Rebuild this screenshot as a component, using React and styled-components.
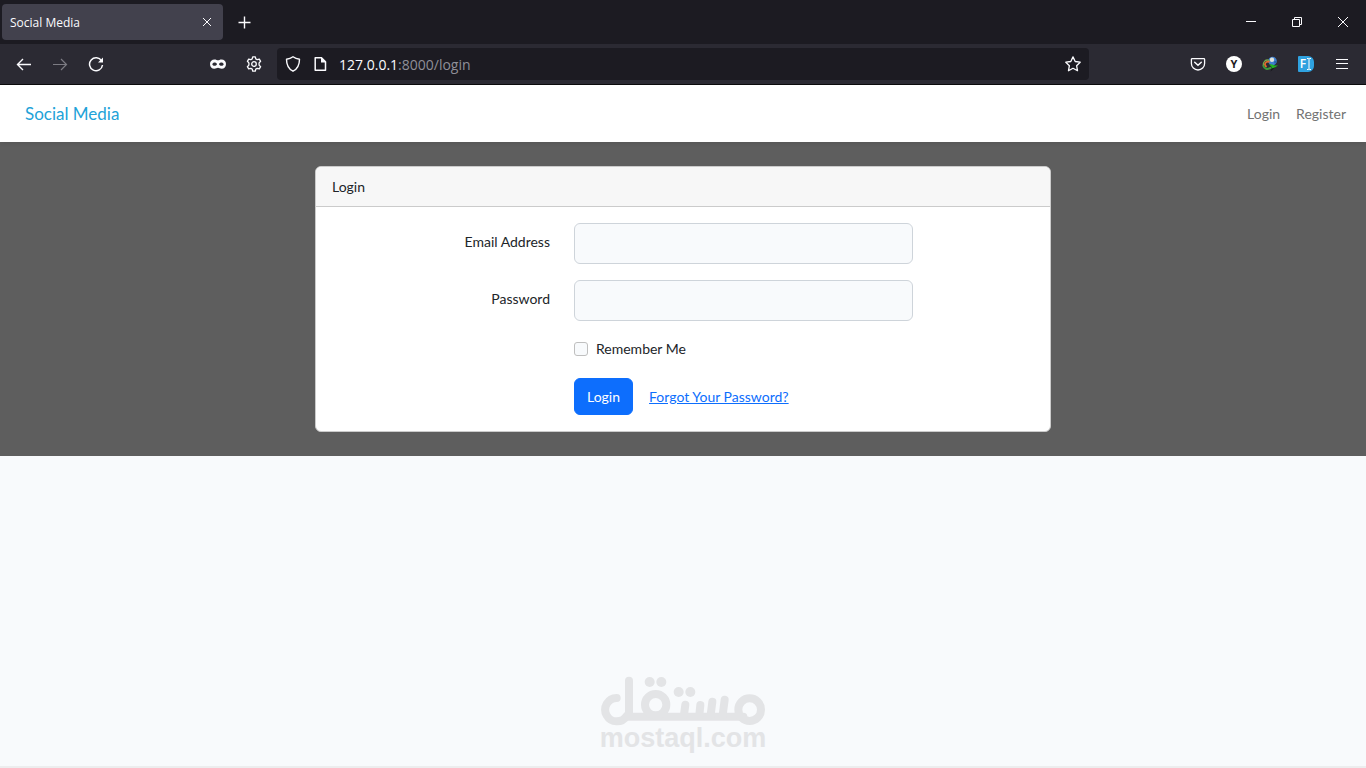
import React, { useState } from "react";
import styled, { createGlobalStyle } from "styled-components";

function App() {
  return (
    <Screen>
      <GlobalStyle />
      <BrowserTabs />
      <BrowserToolbar />
      <Page>
        <NavBar />
        <LoginForm />
        <Watermark />
      </Page>
    </Screen>
  );
}

export default App;

function Icon({ size = 16, children }) {
  return (
    <svg width={size} height={size} viewBox="0 0 16 16" fill="none" stroke="currentColor" aria-hidden="true">
      {children}
    </svg>
  );
}

function BrowserTabs() {
  return (
    <TabBar>
      <Tab>
        <TabTitle>Social Media</TabTitle>
        <CloseTab type="button" aria-label="Close tab">
          <Icon>
            <path d="M4 4l8 8M12 4l-8 8" />
          </Icon>
        </CloseTab>
      </Tab>
      <NewTab type="button" aria-label="New tab">
        <Icon>
          <path d="M8.5 2.5v12M2.5 8.5h12" strokeWidth="1.4" />
        </Icon>
      </NewTab>
      <WindowButtons>
        <WindowButton type="button" aria-label="Minimize">
          <Icon>
            <path d="M3 7.5h10" />
          </Icon>
        </WindowButton>
        <WindowButton type="button" aria-label="Restore">
          <Icon>
            <path d="M3.5 5.5h7v7h-7zM5.5 5.5v-2h7v7h-2" />
          </Icon>
        </WindowButton>
        <WindowButton type="button" aria-label="Close">
          <Icon>
            <path d="M3 3l10 10M13 3L3 13" />
          </Icon>
        </WindowButton>
      </WindowButtons>
    </TabBar>
  );
}

function BrowserToolbar() {
  const [url, setUrl] = useState("/login");
  return (
    <Toolbar>
      <ToolButton type="button" aria-label="Back">
        <Icon>
          <path d="M15 8.500H1.500M7 3L1.500 8.500 7 14" strokeWidth="1.400" />
        </Icon>
      </ToolButton>
      <ToolButton type="button" aria-label="Forward" disabled>
        <Icon>
          <path d="M1 8.500h13.500M9 3l5.500 5.500L9 14" strokeWidth="1.200" />
        </Icon>
      </ToolButton>
      <ToolButton type="button" aria-label="Reload" onClick={() => setUrl("/login")}>
        <Icon>
          <path d="M13.6 4.800A6.500 6.500 0 1 0 14.500 9" strokeWidth="1.500" />
          <path d="M15 1.500v5h-5z" fill="currentColor" stroke="none" />
        </Icon>
      </ToolButton>
      <Spacer />
      <ToolButton type="button" aria-label="Private browsing">
        <Icon>
          <path
            d="M4.500 3.500C2 3.500 0 5 0 8s1.800 4.800 4.300 4.800c1.700 0 2.500-1 3.700-1s2 1 3.700 1C14.200 12.800 16 11 16 8s-2-4.500-4.500-4.500C9.800 3.500 9 4.300 8 4.300s-1.800-.8-3.500-.8zM2.300 8.200c.6-1.900 3.700-2.300 4.700 0-1 2-4 2-4.700 0zm11.400 0c-.7 2-3.700 2-4.700 0 1-2.300 4.100-1.900 4.700 0z"
            fill="currentColor"
            fillRule="evenodd"
            stroke="none"
          />
        </Icon>
      </ToolButton>
      <ToolButton type="button" aria-label="Settings">
        <Icon>
          <path
            d="M6.700.8h2.600l.5 2.100 1.400.8 2.100-.6 1.300 2.200L13.100 6.900v2.200l1.500 1.600-1.300 2.200-2.100-.6-1.400.8-.5 2.100H6.700l-.5-2.100-1.400-.8-2.100.6-1.300-2.200L2.900 9.100V6.900L1.400 5.300l1.300-2.200 2.100.6 1.400-.8z"
            strokeWidth="1.300"
            strokeLinejoin="round"
          />
          <circle cx="8" cy="8" r="2.300" strokeWidth="1.300" />
        </Icon>
      </ToolButton>
      <AddressBar>
        <Icon>
          <path
            d="M8 .8c2 1.500 4.200 2.200 6.500 2.400 0 5.500-1.500 9.500-6.500 12C3 12.700 1.500 8.700 1.500 3.200 3.800 3 6 2.300 8 .8z"
            strokeWidth="1.400"
            strokeLinejoin="round"
          />
        </Icon>
        <Icon>
          <path d="M3.200 1.700h6.300l4 4v8.600H3.200z" strokeWidth="1.500" strokeLinejoin="round" />
          <path d="M9 1v5.500h5.200z" fill="currentColor" stroke="none" />
        </Icon>
        <Address>
          <b>127.0.0.1</b>:8000{url}
        </Address>
        <Star type="button" aria-label="Bookmark this page">
          <Icon>
            <path
              d="M8 .9l2.200 4.600 5 .7-3.600 3.500.9 5L8 12.300l-4.500 2.400.9-5L.8 6.200l5-.7z"
              strokeWidth="1.300"
              strokeLinejoin="round"
            />
          </Icon>
        </Star>
      </AddressBar>
      <Spacer />
      <ToolButton type="button" aria-label="Pocket">
        <Icon>
          <path d="M2.200 2.600h11.600c.5 0 .8.300.8.800v4a6.600 6.600 0 0 1-13.200 0v-4c0-.5.300-.8.800-.8z" strokeWidth="1.300" />
          <path d="M4.700 6.300L8 9.300l3.300-3" strokeWidth="1.500" strokeLinecap="round" />
        </Icon>
      </ToolButton>
      <ToolButton type="button" aria-label="Account">
        <Avatar>Y</Avatar>
      </ToolButton>
      <ToolButton type="button" aria-label="Download manager">
        <Icon>
          <circle cx="10.500" cy="5" r="4.300" fill="#3f7fcf" stroke="none" />
          <circle cx="10" cy="3.800" r="2.200" fill="#dfe3da" stroke="none" />
          <path d="M12 5.500l2.500-.5-1.500 3z" fill="#235ba0" stroke="none" />
          <path d="M7.500 4.500C3.500 2.800.8 6 1.200 10" stroke="#76a94e" strokeWidth="1.300" />
          <path d="M7.500 5.800C3.500 5 1.300 8.500 4.500 11" stroke="#e36c2c" strokeWidth="1.700" />
          <path d="M1.200 9.500c1 3.500 4 4.500 8 2.200" stroke="#3c9a3c" strokeWidth="2" />
          <path d="M7 8.200l3.500.3 2 1H16l-6.500 4 .2-2.500z" fill="#22b422" stroke="none" />
          <path d="M8.500 15.500l1-3 3.500-1z" fill="#15151b" stroke="none" />
        </Icon>
      </ToolButton>
      <ToolButton type="button" aria-label="Form filler">
        <FillBadge>
          F
          <svg width="6" height="12" viewBox="0 0 6 12" fill="none" stroke="#fff" aria-hidden="true">
            <path d="M1 .5h1.500l.5.500.5-.5H5M3 1v10M1 11.500h1.500L3 11l.5.500H5" />
          </svg>
        </FillBadge>
      </ToolButton>
      <ToolButton type="button" aria-label="Open menu">
        <Icon>
          <path d="M2 3.500h12M2 7.500h12M2 12.500h12" strokeWidth="1.200" />
        </Icon>
      </ToolButton>
    </Toolbar>
  );
}

function NavBar() {
  return (
    <Nav>
      <Brand href="#home">Social Media</Brand>
      <NavLinks>
        <NavLink href="#login">Login</NavLink>
        <NavLink href="#register">Register</NavLink>
      </NavLinks>
    </Nav>
  );
}

function LoginForm() {
  const [email, setEmail] = useState("");
  const [password, setPassword] = useState("");
  const [remember, setRemember] = useState(false);

  return (
    <Main>
      <Card>
        <CardHeader>Login</CardHeader>
        <CardBody onSubmit={(e) => e.preventDefault()}>
          <Label htmlFor="email">Email Address</Label>
          <Input id="email" type="email" value={email} onChange={(e) => setEmail(e.target.value)} />
          <Label htmlFor="password">Password</Label>
          <Input
            id="password"
            type="password"
            value={password}
            onChange={(e) => setPassword(e.target.value)}
          />
          <Check>
            <CheckInput
              id="remember"
              type="checkbox"
              checked={remember}
              onChange={(e) => setRemember(e.target.checked)}
            />
            <label htmlFor="remember">Remember Me</label>
          </Check>
          <Actions>
            <Submit type="submit">Login</Submit>
            <Forgot href="#reset">Forgot Your Password?</Forgot>
          </Actions>
        </CardBody>
      </Card>
    </Main>
  );
}

function Watermark() {
  return (
    <Footer>
      <svg width="166" height="50" viewBox="60 48 498 150" fill="none" stroke="currentColor" aria-hidden="true">
        <g strokeWidth="24" strokeLinecap="round">
          <path d="M110 114a35 35 0 1 0 30 54" />
          <path d="M147 62v108H490" />
          <circle cx="227" cy="134" r="32" />
          <circle cx="509" cy="149" r="34" />
          <path d="M316 134l-4 30M361 135l-3 30M397 125l-5 40M434 119l-6 46" />
        </g>
        <g fill="currentColor" stroke="none">
          <circle cx="209" cy="66" r="15" />
          <circle cx="244" cy="66" r="15" />
          <circle cx="296" cy="96" r="15" />
          <circle cx="331" cy="96" r="15" />
        </g>
      </svg>
      <SiteName>mostaql.com</SiteName>
    </Footer>
  );
}

const GlobalStyle = createGlobalStyle`
  * {
    box-sizing: border-box;
  }
  body {
    margin: 0;
    background-color: #f8fafc;
  }
  button, input {
    font: inherit;
    margin: 0;
  }
  svg {
    display: block;
    flex: none;
  }
`;

const Screen = styled.div`
  display: flex;
  flex-direction: column;
  min-height: 100vh;
  font-family: "Open Sans", sans-serif;
`;

const TabBar = styled.div`
  display: flex;
  align-items: center;
  height: 44px;
  padding-left: 2px;
  background-color: #1c1b22;
  color: #fbfbfe;
`;

const Tab = styled.div`
  display: flex;
  align-items: center;
  justify-content: space-between;
  width: 221px;
  height: 36px;
  padding: 0 8px;
  border-radius: 4px;
  background-color: #42414d;
`;

const TabTitle = styled.span`
  font-size: 12px;
`;

const PlainButton = styled.button`
  display: flex;
  align-items: center;
  justify-content: center;
  padding: 0;
  border: 0;
  background: none;
  color: #fbfbfe;
  cursor: pointer;
`;

const CloseTab = styled(PlainButton)`
  width: 16px;
  height: 16px;
`;

const NewTab = styled(PlainButton)`
  width: 42px;
  height: 36px;
`;

const WindowButtons = styled.div`
  display: flex;
  margin-left: auto;
`;

const WindowButton = styled(PlainButton)`
  width: 46px;
  height: 44px;
`;

const Toolbar = styled.div`
  display: flex;
  align-items: center;
  height: 41px;
  padding: 0 6px;
  border-bottom: 1px solid #0c0c0d;
  background-color: #2b2a33;
`;

const ToolButton = styled(PlainButton)`
  flex: none;
  width: 36px;
  height: 32px;

  &:disabled {
    color: #7c7b83;
    cursor: default;
  }
`;

const Spacer = styled.div`
  flex: 1;
  max-width: 86px;
`;

const AddressBar = styled.div`
  display: flex;
  flex: 1;
  align-items: center;
  gap: 11px;
  height: 32px;
  margin: 0 5px;
  padding: 0 8px;
  border-radius: 4px;
  background-color: #1c1b22;
  color: #fbfbfe;
`;

const Address = styled.span`
  flex: 1;
  font-size: 14px;
  color: #8f8f98;

  b {
    font-weight: 400;
    color: #fbfbfe;
  }
`;

const Star = styled(PlainButton)`
  width: 16px;
  height: 16px;
`;

const Avatar = styled.span`
  width: 16px;
  height: 16px;
  border-radius: 50%;
  background-color: #fff;
  color: #1c1b22;
  font-size: 11px;
  font-weight: 700;
  line-height: 16px;
`;

const FillBadge = styled.span`
  display: flex;
  align-items: center;
  justify-content: center;
  width: 16px;
  height: 16px;
  border-radius: 1px 6px 6px 1px;
  background-color: #2fa2e0;
  color: #fff;
  font-size: 12px;
  font-weight: 600;
  line-height: 16px;
`;

const Page = styled.div`
  display: flex;
  flex: 1;
  flex-direction: column;
  border-bottom: 2px solid #ededee;
  background-color: #f8fafc;
  color: #212529;
  font-family: Lato, sans-serif;
  font-size: 14px;
  line-height: 24px;
`;

const Nav = styled.nav`
  position: relative;
  display: flex;
  align-items: center;
  justify-content: space-between;
  height: 57px;
  padding: 0 20px 0 25px;
  background-color: #fff;
  box-shadow: 0 2px 4px rgba(0, 0, 0, 0.075);
`;

const Brand = styled.a`
  color: #22a2d8;
  font-size: 17px;
  text-decoration: none;
`;

const NavLinks = styled.div`
  display: flex;
  gap: 16px;
`;

const NavLink = styled.a`
  color: #737373;
  text-decoration: none;
`;

const Main = styled.main`
  padding: 24px;
  background-color: #5e5e5e;
`;

const Card = styled.section`
  max-width: 736px;
  margin: 0 auto;
  border: 1px solid #cbcbcb;
  border-radius: 6px;
  background-color: #fff;
  overflow: hidden;
`;

const CardHeader = styled.div`
  padding: 8px 16px 7px;
  border-bottom: 1px solid #cbcbcb;
  background-color: #f7f7f7;
`;

const CardBody = styled.form`
  display: grid;
  grid-template-columns: repeat(12, 1fr);
  gap: 16px 24px;
  padding: 16px;
`;

const Label = styled.label`
  grid-column: 1 / span 4;
  padding-top: 7px;
  text-align: right;
`;

const Input = styled.input`
  grid-column: 5 / span 6;
  width: 100%;
  height: 41px;
  padding: 8px 12px;
  border: 1px solid #ced4da;
  border-radius: 6px;
  background-color: #f8fafc;
`;

const Check = styled.div`
  display: flex;
  grid-column: 5 / span 6;
  align-items: center;
  gap: 8px;
  padding-bottom: 1px;
`;

const CheckInput = styled.input`
  appearance: none;
  width: 14px;
  height: 14px;
  border: 1px solid #bfbfbf;
  border-radius: 3px;
  background-color: #f8fafc;

  &:checked {
    border-color: #0d6efd;
    background-color: #0d6efd;
  }
`;

const Actions = styled.div`
  display: flex;
  grid-column: 5 / span 8;
  align-items: center;
  gap: 16px;
`;

const Submit = styled.button`
  height: 37px;
  padding: 0 12px;
  border: 1px solid #0d6efd;
  border-radius: 6px;
  background-color: #0d6efd;
  color: #fff;
  cursor: pointer;
`;

const Forgot = styled.a`
  color: #0d6efd;
`;

const Footer = styled.footer`
  display: flex;
  flex-direction: column;
  align-items: center;
  margin-top: auto;
  padding-bottom: 16px;
  color: #e3e4e6;
`;

const SiteName = styled.span`
  font-family: "Liberation Sans", Arial, sans-serif;
  font-size: 27px;
  font-weight: 700;
  line-height: 24px;
`;
